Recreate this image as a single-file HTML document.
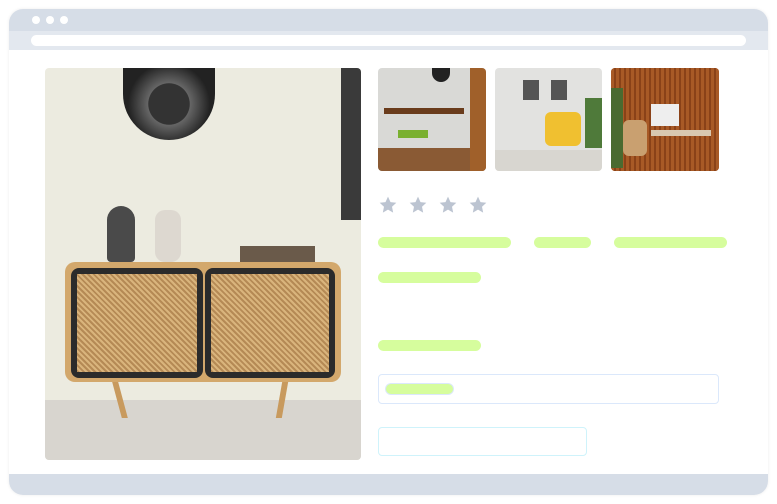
<!DOCTYPE html>
<html><head><style>
*{margin:0;padding:0;box-sizing:border-box}
body{width:777px;height:504px;background:#fff;position:relative;overflow:hidden;font-family:"Liberation Sans",sans-serif}
.a{position:absolute}
.bar{position:absolute;height:11px;border-radius:6px;background:#d6fd9d}
.star{position:absolute;top:195px;width:20px;height:20px;fill:#bcc4d1}
</style></head><body>
<div class="a" style="left:9px;top:9px;width:759px;height:486px;border-radius:14px;background:#fff;box-shadow:0 0 3px rgba(0,0,0,.08);overflow:hidden">
 <div class="a" style="left:0;top:0;width:759px;height:22px;background:#d6dde7"></div>
 <div class="a" style="left:0;top:22px;width:759px;height:19px;background:#e3e8ef"></div>
 <div class="a" style="left:22px;top:26px;width:715px;height:11px;border-radius:6px;background:#fff"></div>
 <div class="a" style="left:23px;top:7px;width:8px;height:8px;border-radius:50%;background:#fff"></div>
 <div class="a" style="left:37px;top:7px;width:8px;height:8px;border-radius:50%;background:#fff"></div>
 <div class="a" style="left:51px;top:7px;width:8px;height:8px;border-radius:50%;background:#fff"></div>
 <div class="a" style="left:0;top:465px;width:759px;height:21px;background:#d6dde7"></div>
</div>
<div class="a" style="left:45px;top:68px;width:316px;height:392px;border-radius:4px;overflow:hidden;background:#ecebe0">
 <div class="a" style="left:0;top:332px;width:316px;height:60px;background:#d8d5cf"></div>
 <div class="a" style="left:296px;top:0;width:20px;height:152px;background:#3a3a3a"></div>
 <div class="a" style="left:78px;top:0;width:92px;height:72px;border-radius:0 0 46px 46px;background:radial-gradient(circle,#333 35%,#666 36%,#222 70%)"></div>
 <div class="a" style="left:62px;top:138px;width:28px;height:56px;border-radius:14px 14px 4px 4px;background:#4a4a4a"></div>
 <div class="a" style="left:110px;top:142px;width:26px;height:52px;border-radius:10px;background:#ddd8d0"></div>
 <div class="a" style="left:195px;top:178px;width:75px;height:16px;background:#6a5a4a"></div>
 <div class="a" style="left:20px;top:194px;width:276px;height:120px;border-radius:10px;background:#d3a86c"></div>
 <div class="a" style="left:26px;top:200px;width:132px;height:110px;border-radius:8px;background:#2b2b2b"></div>
 <div class="a" style="left:160px;top:200px;width:130px;height:110px;border-radius:8px;background:#2b2b2b"></div>
 <div class="a" style="left:32px;top:206px;width:120px;height:98px;background:repeating-linear-gradient(45deg,#b58a55 0 2px,#d9b47c 2px 4px)"></div>
 <div class="a" style="left:166px;top:206px;width:118px;height:98px;background:repeating-linear-gradient(45deg,#b58a55 0 2px,#d9b47c 2px 4px)"></div>
 <div class="a" style="left:72px;top:314px;width:6px;height:36px;background:#c89a5e;transform:skewX(15deg)"></div>
 <div class="a" style="left:234px;top:314px;width:6px;height:36px;background:#c89a5e;transform:skewX(-10deg)"></div>
</div>
<div class="a" style="left:378px;top:68px;width:108px;height:103px;border-radius:4px;overflow:hidden;background:#d9d9d6">
 <div class="a" style="left:0;top:80px;width:108px;height:23px;background:#8a5a34"></div>
 <div class="a" style="left:92px;top:0;width:16px;height:103px;background:#a0602a"></div>
 <div class="a" style="left:6px;top:40px;width:80px;height:6px;background:#6a3c1c"></div>
 <div class="a" style="left:20px;top:62px;width:30px;height:8px;background:#7ab030"></div>
 <div class="a" style="left:54px;top:0;width:18px;height:14px;border-radius:0 0 9px 9px;background:#222"></div>
</div>
<div class="a" style="left:495px;top:68px;width:107px;height:103px;border-radius:4px;overflow:hidden;background:#e2e2e0">
 <div class="a" style="left:0;top:82px;width:107px;height:21px;background:#d8d6d0"></div>
 <div class="a" style="left:50px;top:44px;width:36px;height:34px;border-radius:6px;background:#f0c030"></div>
 <div class="a" style="left:28px;top:12px;width:16px;height:20px;background:#555"></div>
 <div class="a" style="left:56px;top:12px;width:16px;height:20px;background:#555"></div>
 <div class="a" style="left:90px;top:30px;width:17px;height:50px;background:#4f7a3a"></div>
</div>
<div class="a" style="left:611px;top:68px;width:108px;height:103px;border-radius:4px;overflow:hidden;background:#a4521e">
 <div class="a" style="left:0;top:0;width:108px;height:103px;background:repeating-linear-gradient(90deg,#a85a26 0 3px,#8a4218 3px 5px)"></div>
 <div class="a" style="left:40px;top:62px;width:60px;height:6px;background:#d8c8b0"></div>
 <div class="a" style="left:40px;top:36px;width:28px;height:22px;background:#eee"></div>
 <div class="a" style="left:12px;top:52px;width:24px;height:36px;border-radius:6px;background:#c9a070"></div>
 <div class="a" style="left:0;top:20px;width:12px;height:80px;background:#4a6a30"></div>
</div>
<svg class="star" style="left:378px" viewBox="0 0 24 24"><path d="M12 2l3 6.5 7 .8-5.2 4.8 1.4 7-6.2-3.6-6.2 3.6 1.4-7L2 9.3l7-.8z"/></svg>
<svg class="star" style="left:408px" viewBox="0 0 24 24"><path d="M12 2l3 6.5 7 .8-5.2 4.8 1.4 7-6.2-3.6-6.2 3.6 1.4-7L2 9.3l7-.8z"/></svg>
<svg class="star" style="left:438px" viewBox="0 0 24 24"><path d="M12 2l3 6.5 7 .8-5.2 4.8 1.4 7-6.2-3.6-6.2 3.6 1.4-7L2 9.3l7-.8z"/></svg>
<svg class="star" style="left:468px" viewBox="0 0 24 24"><path d="M12 2l3 6.5 7 .8-5.2 4.8 1.4 7-6.2-3.6-6.2 3.6 1.4-7L2 9.3l7-.8z"/></svg>
<div class="bar" style="left:378px;top:237px;width:133px"></div>
<div class="bar" style="left:534px;top:237px;width:57px"></div>
<div class="bar" style="left:614px;top:237px;width:113px"></div>
<div class="bar" style="left:378px;top:272px;width:103px"></div>
<div class="bar" style="left:378px;top:340px;width:103px"></div>
<div class="a" style="left:378px;top:374px;width:341px;height:30px;border:1.5px solid #dbe8fb;border-radius:4px"></div>
<div class="bar" style="left:386px;top:384px;width:67px;height:10px;box-shadow:0 0 0 1px #dbe8fb"></div>
<div class="a" style="left:378px;top:427px;width:209px;height:29px;border:1.5px solid #cff3fb;border-radius:4px"></div>
</body></html>
